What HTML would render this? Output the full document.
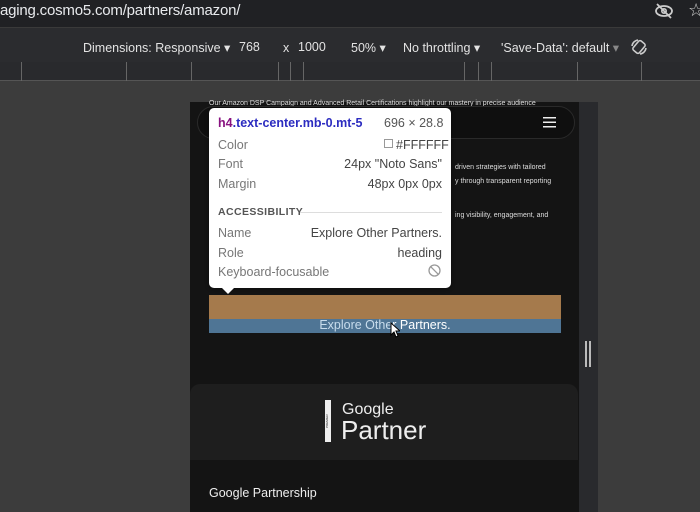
<!DOCTYPE html>
<html><head><meta charset="utf-8"><style>
*{margin:0;padding:0;box-sizing:border-box}
body{width:700px;height:512px;overflow:hidden;background:#3c3c3c;font-family:"Liberation Sans","DejaVu Sans",sans-serif;position:relative}
.abs{position:absolute}
</style></head><body>
<!-- address bar -->
<div class="abs" style="left:0;top:0;width:700px;height:27px;background:#202124"></div>
<div class="abs" style="left:0;top:2px;font-size:15px;color:#e8eaed;letter-spacing:-0.2px">aging.cosmo5.com/partners/amazon/</div>
<svg class="abs" style="left:654px;top:2px" width="20" height="18" viewBox="0 0 20 18"><ellipse cx="10" cy="9" rx="8" ry="5" fill="none" stroke="#ccc" stroke-width="1.8"/><circle cx="10" cy="9" r="2.2" fill="none" stroke="#ccc" stroke-width="1.6"/><line x1="3" y1="2" x2="17" y2="16" stroke="#ccc" stroke-width="1.8"/></svg>
<div class="abs" style="left:688px;top:0px;font-size:18px;color:#ccc">☆</div>
<!-- toolbar -->
<div class="abs" style="left:0;top:27px;width:700px;height:35px;background:#2b2c2f;border-top:1px solid #3a3a3a"></div>
<div class="abs" style="left:83px;top:40px;font-size:12.5px;color:#e3e3e3;white-space:pre">Dimensions: Responsive ▾</div>
<div class="abs" style="left:239px;top:40px;font-size:12.5px;color:#e3e3e3">768</div>
<div class="abs" style="left:283px;top:41px;font-size:12.5px;color:#e3e3e3">x</div>
<div class="abs" style="left:298px;top:40px;font-size:12.5px;color:#e3e3e3">1000</div>
<div class="abs" style="left:351px;top:40px;font-size:12.5px;color:#e3e3e3">50% ▾</div>
<div class="abs" style="left:403px;top:40px;font-size:12.5px;color:#e3e3e3">No throttling ▾</div>
<div class="abs" style="left:501px;top:40px;font-size:12.5px;color:#e3e3e3">'Save-Data': default <span style="color:#888">▾</span></div>
<svg class="abs" style="left:629px;top:37px" width="20" height="20" viewBox="0 0 20 20" fill="none" stroke="#ccc" stroke-width="1.6"><rect x="6" y="4" width="8" height="12" rx="2" transform="rotate(40 10 10)"/><path d="M3 9a7 7 0 0 1 6-6"/><path d="M17 11a7 7 0 0 1-6 6"/></svg>
<!-- ruler -->
<div class="abs" style="left:0;top:62px;width:700px;height:19px;background:#292a2d;border-bottom:1px solid #555"></div>
<div class="abs" style="left:21px;top:62px;width:1px;height:19px;background:#666"></div>
<div class="abs" style="left:126px;top:62px;width:1px;height:19px;background:#666"></div>
<div class="abs" style="left:191px;top:62px;width:1px;height:19px;background:#666"></div>
<div class="abs" style="left:278px;top:62px;width:1px;height:19px;background:#666"></div>
<div class="abs" style="left:290px;top:62px;width:1px;height:19px;background:#666"></div>
<div class="abs" style="left:303px;top:62px;width:1px;height:19px;background:#666"></div>
<div class="abs" style="left:464px;top:62px;width:1px;height:19px;background:#666"></div>
<div class="abs" style="left:478px;top:62px;width:1px;height:19px;background:#666"></div>
<div class="abs" style="left:491px;top:62px;width:1px;height:19px;background:#666"></div>
<div class="abs" style="left:577px;top:62px;width:1px;height:19px;background:#666"></div>
<div class="abs" style="left:641px;top:62px;width:1px;height:19px;background:#666"></div>
<!-- page -->
<div class="abs" style="left:190px;top:102px;width:389px;height:410px;background:#141414"></div>
<div class="abs" style="left:579px;top:102px;width:19px;height:410px;background:#292a2d"></div>
<div class="abs" style="left:585px;top:341px;width:2px;height:26px;background:#bbb"></div>
<div class="abs" style="left:589px;top:341px;width:2px;height:26px;background:#bbb"></div>
<div class="abs" style="left:209px;top:100px;font-size:7px;color:#ddd;white-space:nowrap">Our Amazon DSP Campaign and Advanced Retail Certifications highlight our mastery in precise audience</div>
<div class="abs" style="left:197px;top:106px;width:378px;height:33px;border:1px solid #2a2a2a;border-radius:17px;background:#0f0f0f"></div>
<svg class="abs" style="left:543px;top:117px" width="13" height="11"><rect y="0" width="13" height="1.5" fill="#eee"/><rect y="4.5" width="13" height="1.5" fill="#eee"/><rect y="9" width="13" height="1.5" fill="#eee"/></svg>
<div class="abs" style="left:455px;top:164px;font-size:7px;color:#ddd;white-space:nowrap">driven strategies with tailored</div>
<div class="abs" style="left:455px;top:178px;font-size:7px;color:#ddd;white-space:nowrap">y through transparent reporting</div>
<div class="abs" style="left:455px;top:212px;font-size:7px;color:#ddd;white-space:nowrap">ing visibility, engagement, and</div>
<!-- highlight -->
<div class="abs" style="left:209px;top:295px;width:352px;height:24px;background:#a57a4c"></div>
<div class="abs" style="left:209px;top:319px;width:352px;height:14px;background:#4f7595"></div>
<div class="abs" style="left:209px;top:318px;width:352px;text-align:center;font-size:12.5px;color:#c8dcec">Explore Othe<span style="color:#fff">r Partners.</span></div>
<svg class="abs" style="left:390px;top:322px" width="10" height="16" viewBox="0 0 10 16"><path d="M1 1v12l3-3 2 5 2-1-2-5h4z" fill="#fff" stroke="#000" stroke-width="1"/></svg>
<!-- card -->
<div class="abs" style="left:190px;top:384px;width:388px;height:76px;background:#1e1e1e;border-radius:10px 10px 0 0"></div>
<div class="abs" style="left:325px;top:400px;width:6px;height:42px;background:#eee"></div>
<div class="abs" style="left:325px;top:405px;width:6px;font-size:3px;color:#222;writing-mode:vertical-rl;transform:rotate(180deg);height:32px;text-align:center">PREMIER</div>
<div class="abs" style="left:342px;top:401px;font-size:16px;color:#eee">Google</div>
<div class="abs" style="left:341px;top:415px;font-size:26px;color:#eee">Partner</div>
<div class="abs" style="left:209px;top:486px;font-size:12.5px;color:#eee">Google Partnership</div>
<!-- tooltip -->
<div class="abs" style="left:209px;top:108px;width:242px;height:180px;background:#fff;border-radius:5px;box-shadow:0 1px 4px rgba(0,0,0,.4)"></div>
<div class="abs" style="left:222px;top:288px;width:0;height:0;border-left:6px solid transparent;border-right:6px solid transparent;border-top:6px solid #fff"></div>
<div class="abs" style="left:218px;top:116px;font-size:12.5px;font-weight:bold;color:#2c2cc0"><span style="color:#881280">h4</span>.text-center.mb-0.mt-5</div>
<div class="abs" style="left:384px;top:116px;font-size:12.5px;color:#555">696 × 28.8</div>
<div class="abs" style="left:218px;top:138px;font-size:12.5px;color:#777">Color</div>
<div class="abs" style="left:384px;top:139px;width:9px;height:9px;border:1px solid #999"></div>
<div class="abs" style="left:396px;top:138px;font-size:12.5px;color:#444">#FFFFFF</div>
<div class="abs" style="left:218px;top:157px;font-size:12.5px;color:#777">Font</div>
<div class="abs" style="left:300px;top:157px;width:142px;text-align:right;font-size:12.5px;color:#444">24px "Noto Sans"</div>
<div class="abs" style="left:218px;top:177px;font-size:12.5px;color:#777">Margin</div>
<div class="abs" style="left:300px;top:177px;width:142px;text-align:right;font-size:12.5px;color:#444">48px 0px 0px</div>
<div class="abs" style="left:218px;top:206px;font-size:10.5px;font-weight:bold;color:#555;letter-spacing:.4px">ACCESSIBILITY</div>
<div class="abs" style="left:300px;top:212px;width:142px;height:1px;background:#ddd"></div>
<div class="abs" style="left:218px;top:226px;font-size:12.5px;color:#777">Name</div>
<div class="abs" style="left:290px;top:226px;width:152px;text-align:right;font-size:12.5px;color:#444">Explore Other Partners.</div>
<div class="abs" style="left:218px;top:246px;font-size:12.5px;color:#777">Role</div>
<div class="abs" style="left:300px;top:246px;width:142px;text-align:right;font-size:12.5px;color:#444">heading</div>
<div class="abs" style="left:218px;top:265px;font-size:12.5px;color:#777">Keyboard-focusable</div>
<svg class="abs" style="left:428px;top:264px" width="13" height="13" viewBox="0 0 13 13"><circle cx="6.5" cy="6.5" r="5.5" fill="none" stroke="#999" stroke-width="1.3"/><line x1="2.6" y1="2.6" x2="10.4" y2="10.4" stroke="#999" stroke-width="1.3"/></svg>
</body></html>
